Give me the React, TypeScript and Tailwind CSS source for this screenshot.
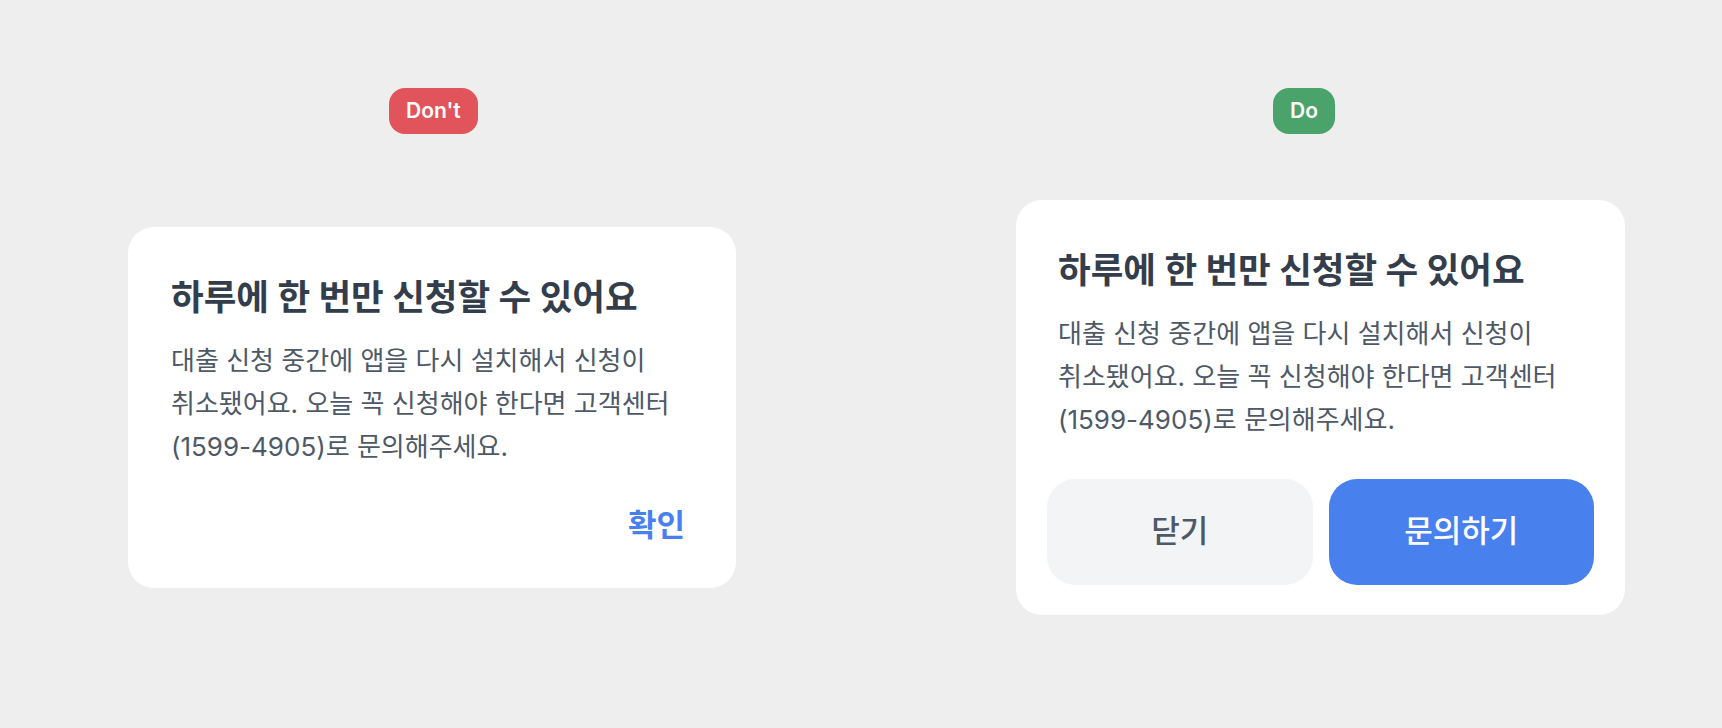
import React from "react";

const font = "font-['Inter','Noto_Sans_CJK_KR',sans-serif]";

function Badge({ label, color, offset }: { label: string; color: string; offset: string }) {
  return (
    <div className={`h-[46px] self-start ${offset} px-[17px] rounded-[16px] ${color} flex items-center text-white text-[21px] font-semibold`}>
      {label}
    </div>
  );
}

function Body() {
  return (
    <p className="mt-[21px] text-[26px] leading-[43px] text-[#4e5968] whitespace-nowrap">
      대출 신청 중간에 앱을 다시 설치해서 신청이
      <br />
      취소됐어요. 오늘 꼭 신청해야 한다면 고객센터
      <br />
      (1599-4905)로 문의해주세요.
    </p>
  );
}

function Title() {
  return (
    <h2 className="text-[35.5px] leading-[40px] font-bold text-[#333d4b] whitespace-nowrap">
      하루에 한 번만 신청할 수 있어요
    </h2>
  );
}

export default function App() {
  return (
    <div className={`w-[1722px] h-[728px] bg-[#eeeeee] ${font} flex pt-[88px] pl-[128px]`}>
      {/* Don't */}
      <div className="w-[608px] flex flex-col">
        <Badge label="Don't" color="bg-[#e2545b]" offset="ml-[261px]" />
        <div className="h-[546px] flex items-center">
          <div className="w-[608px] bg-white rounded-[26px] pt-[51px] pb-[34px] pl-[43px] pr-[45px] flex flex-col">
            <Title />
            <Body />
            <div className="mt-[30px] flex justify-end">
              <button className="h-[56px] px-[6px] text-[31px] font-bold text-[#4880ee]">확인</button>
            </div>
          </div>
        </div>
      </div>

      {/* Do */}
      <div className="w-[609px] ml-[280px] flex flex-col">
        <Badge label="Do" color="bg-[#4aa36a]" offset="ml-[257px]" />
        <div className="h-[546px] flex items-center">
          <div className="w-[609px] bg-white rounded-[26px] pt-[51px] pb-[30px] px-[31px] flex flex-col">
            <div className="px-[11px]">
              <Title />
              <Body />
            </div>
            <div className="mt-[38px] grid grid-cols-2 gap-[16px]">
              <button className="h-[106px] rounded-[28px] bg-[#f2f4f6] text-[31px] font-medium text-[#4e5968]">닫기</button>
              <button className="h-[106px] rounded-[28px] bg-[#4880ee] text-[31px] font-medium text-white">문의하기</button>
            </div>
          </div>
        </div>
      </div>
    </div>
  );
}
